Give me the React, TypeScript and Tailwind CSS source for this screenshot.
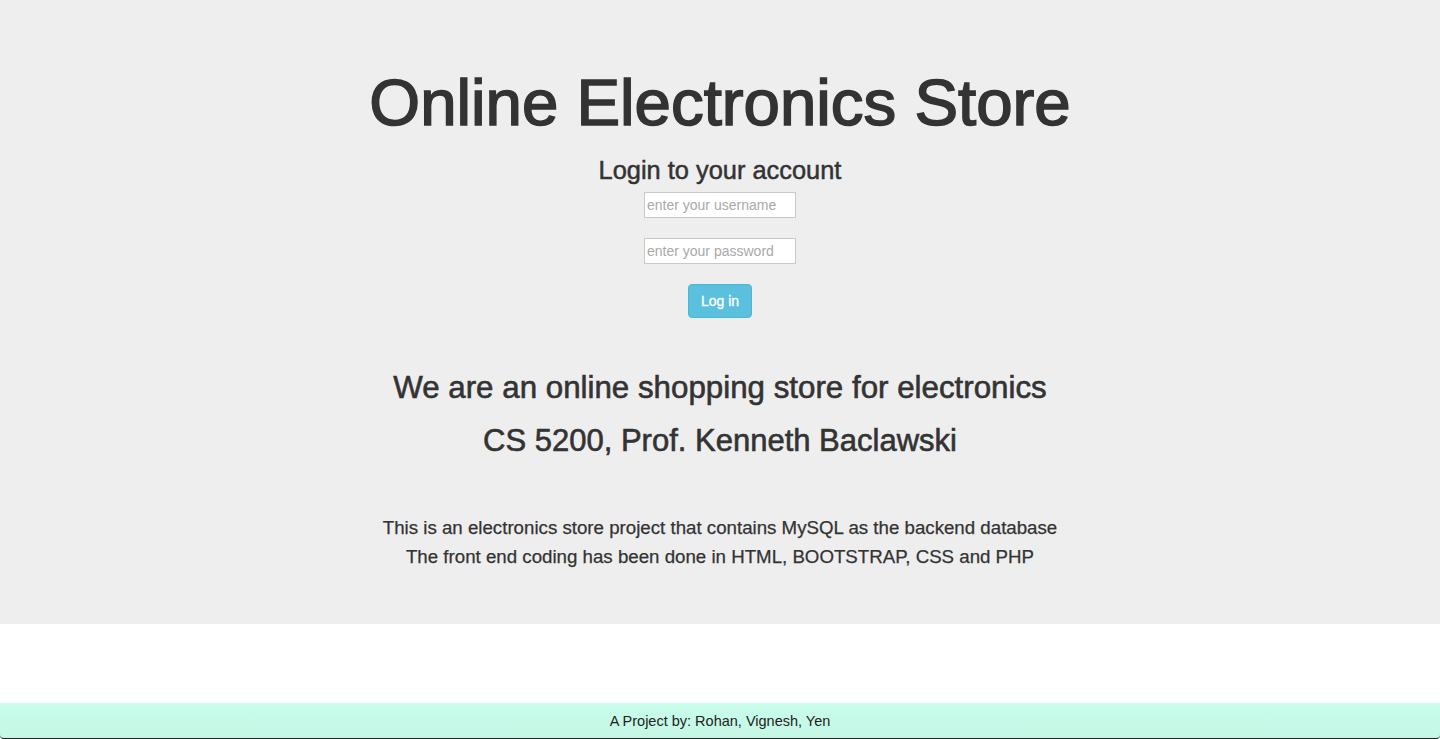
import React from 'react';

export default function App() {
  return (
    <div className="flex h-[739px] w-full flex-col bg-white text-[#333333]" style={{ fontFamily: '"Liberation Sans", Arial, sans-serif' }}>
      {/* jumbotron */}
      <div className="flex h-[624px] flex-col items-center bg-[#eeeeee] pt-[68px] text-center">
        <h1 className="text-[65.4px] leading-[69px] [-webkit-text-stroke:1.6px_#333333]">Online Electronics Store</h1>
        <h3 className="mt-[20px] text-[25.4px] leading-[26px] [-webkit-text-stroke:0.5px_#333333]">Login to your account</h3>
        <form className="flex flex-col items-center">
          <input
            type="text"
            placeholder="enter your username"
            className="mt-[9px] h-[26px] w-[152px] border border-[#c8c8c8] bg-white px-[2px] text-[14px] placeholder:text-[#a9a9a9] focus:outline-none"
          />
          <input
            type="password"
            placeholder="enter your password"
            className="mt-[20px] h-[26px] w-[152px] border border-[#c8c8c8] bg-white px-[2px] text-[14px] placeholder:text-[#a9a9a9] focus:outline-none"
          />
          <button
            type="button"
            className="mt-[20px] h-[34px] w-[64px] rounded-[4px] border border-[#46b8da] bg-[#5bc0de] text-[14px] text-white [-webkit-text-stroke:0.3px_#ffffff]"
          >
            Log in
          </button>
        </form>
        <h2 className="mt-[53px] text-[31.3px] leading-[33px] [-webkit-text-stroke:0.6px_#333333]">We are an online shopping store for electronics</h2>
        <h2 className="mt-[20px] text-[31px] leading-[33px] [-webkit-text-stroke:0.6px_#333333]">CS 5200, Prof. Kenneth Baclawski</h2>
        <p className="mt-[56px] text-[18.7px] leading-[29px] [-webkit-text-stroke:0.25px_#333333]">
          This is an electronics store project that contains MySQL as the backend database
          <br />
          The front end coding has been done in HTML, BOOTSTRAP, CSS and PHP
        </p>
      </div>

      <div className="flex-1" />

      {/* footer */}
      <footer className="flex h-[36px] items-center justify-center rounded-b-[4px] border-b border-[#222222] bg-gradient-to-b from-[#c9fdec] to-[#c4f7e4] pt-[2px] text-[14.5px] text-[#222222]">
        A Project by: Rohan, Vignesh, Yen
      </footer>
    </div>
  );
}
